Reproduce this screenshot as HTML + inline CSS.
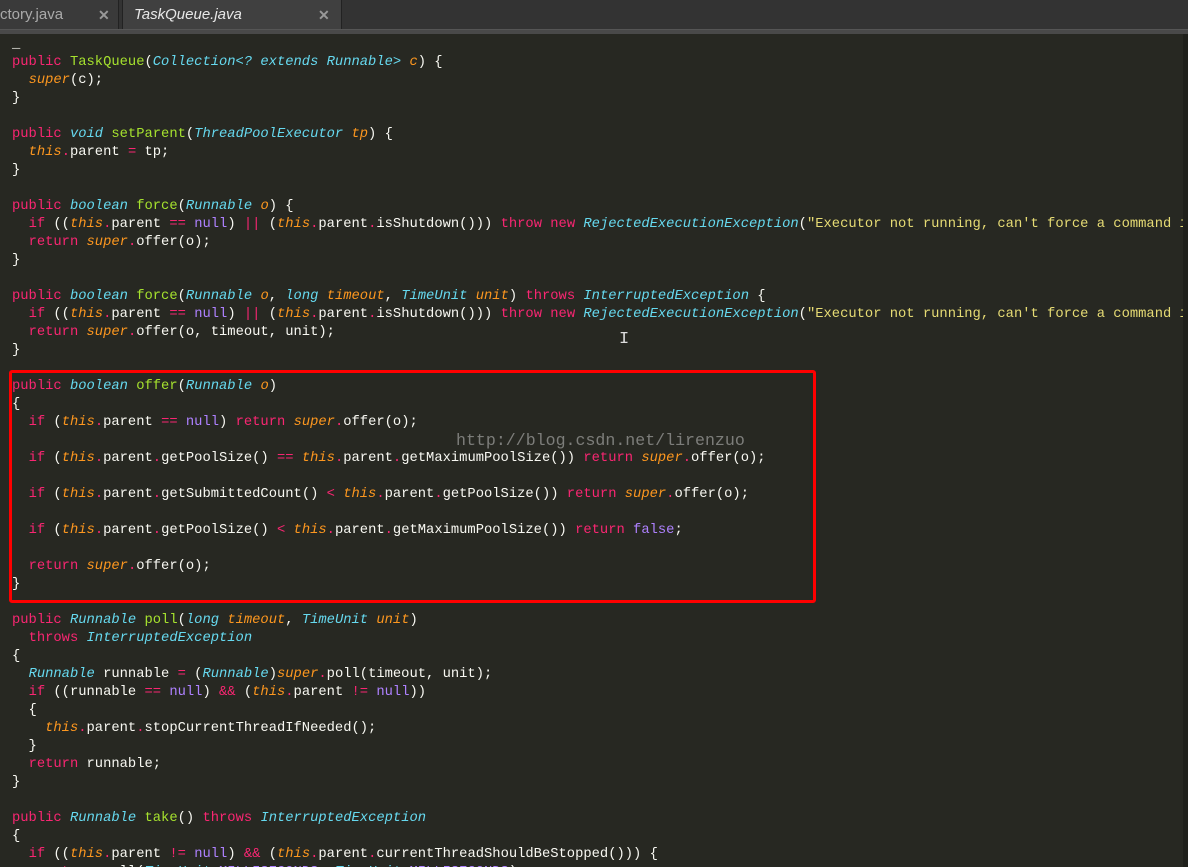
<!DOCTYPE html>
<html><head><meta charset="utf-8"><style>
html,body{margin:0;padding:0;width:1188px;height:867px;overflow:hidden;background:#272822;}
.tabs{position:absolute;left:0;top:0;width:1188px;height:29px;background:#333333;}
.band{position:absolute;left:0;top:29px;width:1188px;height:5px;background:#494949;border-top:1px solid #555;box-sizing:border-box;}
.tab{position:absolute;top:0;height:29px;font:italic 15px "Liberation Sans",sans-serif;color:#ccc;line-height:29px;}
.t1{left:-8px;width:126px;background:#3a3a3a;border-right:1px solid #222;color:#aaa;font-style:normal;}
.t2{left:122px;width:218px;background:#404040;border-left:1px solid #222;border-right:1px solid #222;color:#e8e8e8;}
.x{position:absolute;top:0;line-height:31px;font:bold 14px/31px "Liberation Sans",sans-serif;color:#999;font-style:normal;}
.code{position:absolute;left:0;top:34px;width:1183px;height:833px;overflow:hidden;}
pre{position:absolute;left:12px;top:2px;margin:0;font:13.8px/18px "Liberation Mono",monospace;color:#f8f8f2;white-space:pre;}
.k{color:#f92672}.t{color:#66d9ef;font-style:italic}.f{color:#a6e22e}.p{color:#fd971f;font-style:italic}
.n{color:#ae81ff}.s{color:#e6db74}.h{color:#fd971f;font-style:italic}
.box{position:absolute;left:9px;top:370px;width:807px;height:233px;border:3px solid #f00;box-sizing:border-box;border-radius:3px;}
.wm{position:absolute;left:456px;top:431px;font:16.6px "Liberation Mono",monospace;color:rgba(210,210,210,0.5);}
.sb{position:absolute;right:0;top:34px;width:5px;height:833px;background:#1f201b;}
</style></head><body>
<div class="tabs">
<div class="tab t1"><span style="margin-left:8px">ctory.java</span><span class="x" style="left:106px">✕</span></div>
<div class="tab t2"><span style="margin-left:11px">TaskQueue.java</span><span class="x" style="left:195px">✕</span></div>
</div>
<div class="band"></div>
<div class="sb"></div>
<div class="code"><pre>_
<span class="k">public</span> <span class="f">TaskQueue</span>(<span class="t">Collection&lt;? extends Runnable&gt;</span> <span class="p">c</span>) {
  <span class="h">super</span>(c);
}

<span class="k">public</span> <span class="t">void</span> <span class="f">setParent</span>(<span class="t">ThreadPoolExecutor</span> <span class="p">tp</span>) {
  <span class="h">this</span><span class="k">.</span>parent <span class="k">=</span> tp;
}

<span class="k">public</span> <span class="t">boolean</span> <span class="f">force</span>(<span class="t">Runnable</span> <span class="p">o</span>) {
  <span class="k">if</span> ((<span class="h">this</span><span class="k">.</span>parent <span class="k">==</span> <span class="n">null</span>) <span class="k">||</span> (<span class="h">this</span><span class="k">.</span>parent<span class="k">.</span>isShutdown())) <span class="k">throw</span> <span class="k">new</span> <span class="t">RejectedExecutionException</span>(<span class="s">"Executor not running, can't force a command into the queue"</span>);
  <span class="k">return</span> <span class="h">super</span><span class="k">.</span>offer(o);
}

<span class="k">public</span> <span class="t">boolean</span> <span class="f">force</span>(<span class="t">Runnable</span> <span class="p">o</span>, <span class="t">long</span> <span class="p">timeout</span>, <span class="t">TimeUnit</span> <span class="p">unit</span>) <span class="k">throws</span> <span class="t">InterruptedException</span> {
  <span class="k">if</span> ((<span class="h">this</span><span class="k">.</span>parent <span class="k">==</span> <span class="n">null</span>) <span class="k">||</span> (<span class="h">this</span><span class="k">.</span>parent<span class="k">.</span>isShutdown())) <span class="k">throw</span> <span class="k">new</span> <span class="t">RejectedExecutionException</span>(<span class="s">"Executor not running, can't force a command into the queue"</span>);
  <span class="k">return</span> <span class="h">super</span><span class="k">.</span>offer(o, timeout, unit);
}

<span class="k">public</span> <span class="t">boolean</span> <span class="f">offer</span>(<span class="t">Runnable</span> <span class="p">o</span>)
{
  <span class="k">if</span> (<span class="h">this</span><span class="k">.</span>parent <span class="k">==</span> <span class="n">null</span>) <span class="k">return</span> <span class="h">super</span><span class="k">.</span>offer(o);

  <span class="k">if</span> (<span class="h">this</span><span class="k">.</span>parent<span class="k">.</span>getPoolSize() <span class="k">==</span> <span class="h">this</span><span class="k">.</span>parent<span class="k">.</span>getMaximumPoolSize()) <span class="k">return</span> <span class="h">super</span><span class="k">.</span>offer(o);

  <span class="k">if</span> (<span class="h">this</span><span class="k">.</span>parent<span class="k">.</span>getSubmittedCount() <span class="k">&lt;</span> <span class="h">this</span><span class="k">.</span>parent<span class="k">.</span>getPoolSize()) <span class="k">return</span> <span class="h">super</span><span class="k">.</span>offer(o);

  <span class="k">if</span> (<span class="h">this</span><span class="k">.</span>parent<span class="k">.</span>getPoolSize() <span class="k">&lt;</span> <span class="h">this</span><span class="k">.</span>parent<span class="k">.</span>getMaximumPoolSize()) <span class="k">return</span> <span class="n">false</span>;

  <span class="k">return</span> <span class="h">super</span><span class="k">.</span>offer(o);
}

<span class="k">public</span> <span class="t">Runnable</span> <span class="f">poll</span>(<span class="t">long</span> <span class="p">timeout</span>, <span class="t">TimeUnit</span> <span class="p">unit</span>)
  <span class="k">throws</span> <span class="t">InterruptedException</span>
{
  <span class="t">Runnable</span> runnable <span class="k">=</span> (<span class="t">Runnable</span>)<span class="h">super</span><span class="k">.</span>poll(timeout, unit);
  <span class="k">if</span> ((runnable <span class="k">==</span> <span class="n">null</span>) <span class="k">&amp;&amp;</span> (<span class="h">this</span><span class="k">.</span>parent <span class="k">!=</span> <span class="n">null</span>))
  {
    <span class="h">this</span><span class="k">.</span>parent<span class="k">.</span>stopCurrentThreadIfNeeded();
  }
  <span class="k">return</span> runnable;
}

<span class="k">public</span> <span class="t">Runnable</span> <span class="f">take</span>() <span class="k">throws</span> <span class="t">InterruptedException</span>
{
  <span class="k">if</span> ((<span class="h">this</span><span class="k">.</span>parent <span class="k">!=</span> <span class="n">null</span>) <span class="k">&amp;&amp;</span> (<span class="h">this</span><span class="k">.</span>parent<span class="k">.</span>currentThreadShouldBeStopped())) {
    <span class="k">return</span> poll(<span class="t">TimeUnit</span>.<span class="n">MILLISECONDS</span>, <span class="t">TimeUnit</span>.<span class="n">MILLISECONDS</span>);
</pre></div>
<div class="box"></div>
<div class="wm">http://blog.csdn.net/lirenzuo</div>
<div style="position:absolute;left:619px;top:330px;font:17px 'Liberation Mono',monospace;color:#ddd;">I</div>
</body></html>
